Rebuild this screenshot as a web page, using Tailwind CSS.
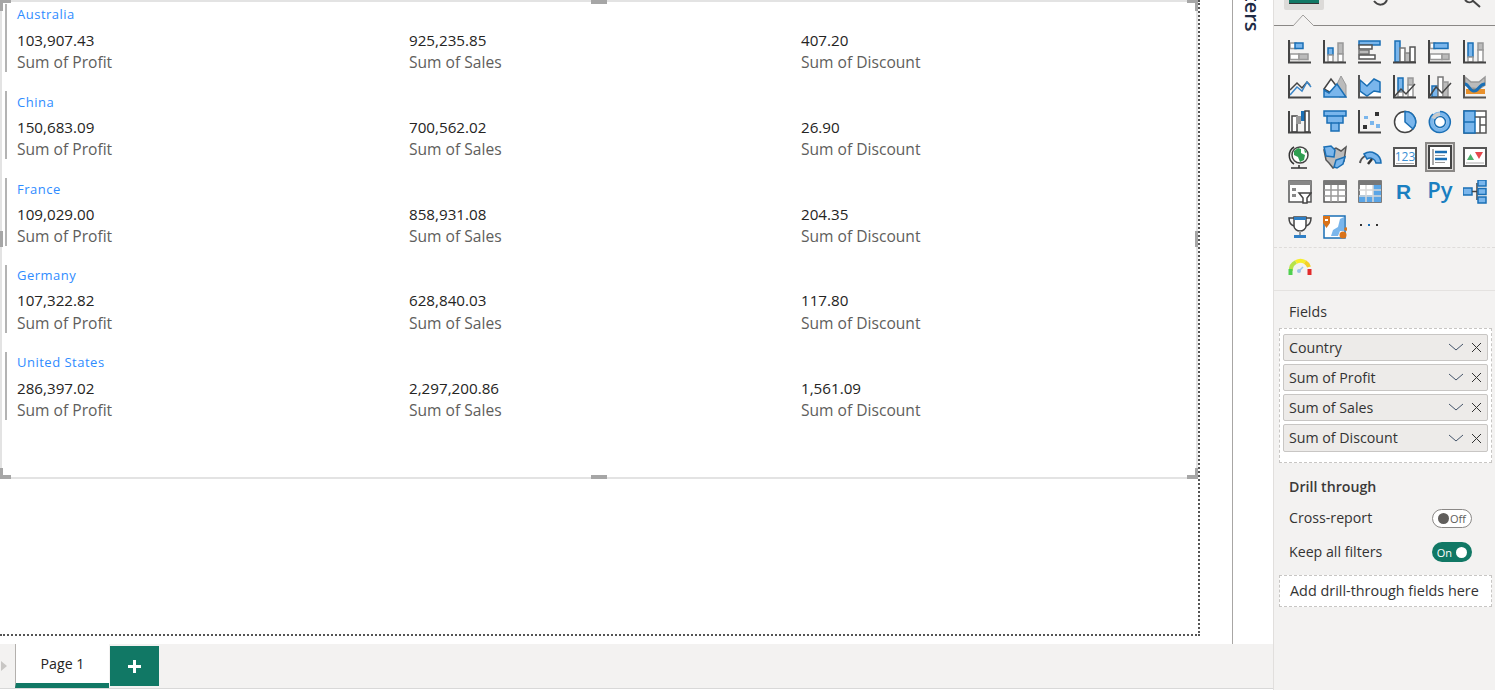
<!DOCTYPE html>
<html lang="en">
<head>
    <meta charset="UTF-8">
    <title>Report canvas</title>
    <script src="https://cdn.jsdelivr.net/npm/@tailwindcss/browser@4"></script>
</head>
<body class="bg-white overflow-hidden font-['Open_Sans',sans-serif] text-[14.2px] text-[#252423]">

<div class="flex w-[1495px] h-[690px] overflow-hidden">
    <!-- Left: canvas + page tabs -->
    <div class="w-[1273px] flex flex-col">
        <div class="flex h-[644px]">
            <div class="w-[1232px] pt-0">
                <div class="w-[1200px] h-[636px] border-r-2 border-b-2 border-dotted border-[#555]">
                    <!-- Selected visual -->
                    <div class="relative w-[1198px] h-[479px] border-2 border-[#e3e3e3]">
                        <div class="absolute -left-[2px] -top-[2px] w-[11px] h-[3px] bg-[#a6a6a6]"></div>
                        <div class="absolute -left-[2px] -top-[2px] w-[3px] h-[11px] bg-[#a6a6a6]"></div>
                        <div class="absolute -right-[2px] -top-[2px] w-[11px] h-[3px] bg-[#a6a6a6]"></div>
                        <div class="absolute -right-[2px] -top-[2px] w-[3px] h-[11px] bg-[#a6a6a6]"></div>
                        <div class="absolute -left-[2px] -bottom-[2px] w-[11px] h-[4px] bg-[#a6a6a6]"></div>
                        <div class="absolute -left-[2px] -bottom-[2px] w-[3px] h-[11px] bg-[#a6a6a6]"></div>
                        <div class="absolute -right-[2px] -bottom-[2px] w-[11px] h-[4px] bg-[#a6a6a6]"></div>
                        <div class="absolute -right-[2px] -bottom-[2px] w-[3px] h-[11px] bg-[#a6a6a6]"></div>
                        <div class="absolute left-[589px] -top-[2px] w-[16px] h-[4px] bg-[#a6a6a6]"></div>
                        <div class="absolute left-[589px] -bottom-[2px] w-[16px] h-[4px] bg-[#a6a6a6]"></div>
                        <div class="absolute -left-[2px] top-[229px] w-[3px] h-[16px] bg-[#a6a6a6]"></div>
                        <div class="absolute -right-[2px] top-[229px] w-[3px] h-[16px] bg-[#a6a6a6]"></div>

                        <!-- Multi-row card -->
                        <div class="flex flex-col">
                            <div class="h-[87px] pl-[3px] pt-[2px]">
                                <div class="border-l-2 border-[#b3b3b3] h-[68px] pl-[10px]">
                                    <div class="text-[13px] leading-[20px] text-[#2f8cff] tracking-[0.5px]">Australia</div>
                                    <div class="grid grid-cols-[392px_392px_392px] mt-[5px] leading-[22px] text-[15.2px]">
                                        <div><div>103,907.43</div><div class="text-[15.6px] text-[#605e5c]">Sum of Profit</div></div>
                                        <div><div>925,235.85</div><div class="text-[15.6px] text-[#605e5c]">Sum of Sales</div></div>
                                        <div><div>407.20</div><div class="text-[15.6px] text-[#605e5c]">Sum of Discount</div></div>
                                    </div>
                                </div>
                            </div>
                            <div class="h-[87px] pl-[3px] pt-[2px]">
                                <div class="border-l-2 border-[#b3b3b3] h-[68px] pl-[10px]">
                                    <div class="text-[13px] leading-[20px] pt-[1px] text-[#2f8cff] tracking-[0.5px]">China</div>
                                    <div class="grid grid-cols-[392px_392px_392px] mt-[4px] leading-[22px] text-[15.2px]">
                                        <div><div>150,683.09</div><div class="text-[15.6px] text-[#605e5c]">Sum of Profit</div></div>
                                        <div><div>700,562.02</div><div class="text-[15.6px] text-[#605e5c]">Sum of Sales</div></div>
                                        <div><div>26.90</div><div class="text-[15.6px] text-[#605e5c]">Sum of Discount</div></div>
                                    </div>
                                </div>
                            </div>
                            <div class="h-[87px] pl-[3px] pt-[2px]">
                                <div class="border-l-2 border-[#b3b3b3] h-[68px] pl-[10px]">
                                    <div class="text-[13px] leading-[20px] pt-[1px] text-[#2f8cff] tracking-[0.5px]">France</div>
                                    <div class="grid grid-cols-[392px_392px_392px] mt-[4px] leading-[22px] text-[15.2px]">
                                        <div><div>109,029.00</div><div class="text-[15.6px] text-[#605e5c]">Sum of Profit</div></div>
                                        <div><div>858,931.08</div><div class="text-[15.6px] text-[#605e5c]">Sum of Sales</div></div>
                                        <div><div>204.35</div><div class="text-[15.6px] text-[#605e5c]">Sum of Discount</div></div>
                                    </div>
                                </div>
                            </div>
                            <div class="h-[87px] pl-[3px] pt-[2px]">
                                <div class="border-l-2 border-[#b3b3b3] h-[68px] pl-[10px]">
                                    <div class="text-[13px] leading-[20px] text-[#2f8cff] tracking-[0.5px]">Germany</div>
                                    <div class="grid grid-cols-[392px_392px_392px] mt-[4px] leading-[23px] text-[15.2px]">
                                        <div><div>107,322.82</div><div class="text-[15.6px] text-[#605e5c]">Sum of Profit</div></div>
                                        <div><div>628,840.03</div><div class="text-[15.6px] text-[#605e5c]">Sum of Sales</div></div>
                                        <div><div>117.80</div><div class="text-[15.6px] text-[#605e5c]">Sum of Discount</div></div>
                                    </div>
                                </div>
                            </div>
                            <div class="h-[87px] pl-[3px] pt-[2px]">
                                <div class="border-l-2 border-[#b3b3b3] h-[68px] pl-[10px]">
                                    <div class="text-[13px] leading-[20px] text-[#2f8cff] tracking-[0.5px]">United States</div>
                                    <div class="grid grid-cols-[392px_392px_392px] mt-[5px] leading-[22px] text-[15.2px]">
                                        <div><div>286,397.02</div><div class="text-[15.6px] text-[#605e5c]">Sum of Profit</div></div>
                                        <div><div>2,297,200.86</div><div class="text-[15.6px] text-[#605e5c]">Sum of Sales</div></div>
                                        <div><div>1,561.09</div><div class="text-[15.6px] text-[#605e5c]">Sum of Discount</div></div>
                                    </div>
                                </div>
                            </div>
                        </div>
                    </div>
                </div>
            </div>
            <!-- Collapsed filters strip -->
            <div class="w-[41px] border-l border-[#a8a6a4] overflow-hidden">
                <div class="[writing-mode:vertical-rl] -mt-[28px] ml-[7px] text-[20px] leading-[24px] font-semibold text-[#1f2a44]">Filters</div>
            </div>
        </div>
        <!-- Page tabs -->
        <div class="h-[45px] bg-[#f3f2f1] flex items-start border-b border-[#d8d8d8]">
            <div class="w-[15px] h-full flex items-center pl-[1px]">
                <div class="w-0 h-0 border-y-[5px] border-y-transparent border-l-[6px] border-l-[#c8c6c4]"></div>
            </div>
            <div class="w-[94px] h-[44px] bg-white border-l border-[#b3b0ad] border-b-[5px] border-b-[#117865] flex items-center justify-center pt-[1px] text-[#252423]">Page 1</div>
            <div class="w-[49px] h-[40px] ml-[1px] mt-[2px] bg-[#117865] flex items-center justify-center">
                <svg width="15" height="15" viewBox="0 0 15 15"><path d="M6 1h3v5h5v3H9v5H6V9H1V6h5z" fill="#fff"/></svg>
            </div>
        </div>
    </div>

    <!-- Right: visualizations pane -->
    <div class="w-[222px] h-[690px] bg-[#f3f2f1] border-l border-[#e1dfdd] text-[#333]">
        <div class="relative h-[26px] border-b border-[#8a8886]">
            <div class="absolute left-[10px] top-0 w-[40px] h-[10px] bg-[#dcdad8] rounded-b-[2px] flex justify-center">
                <div class="w-[30px] h-[4px] bg-[#117865] border-b border-[#333]"></div>
            </div>
            <svg class="absolute left-[19px] top-[14px]" width="22" height="12" viewBox="0 0 22 12"><path d="M0 12 L10 1 L21 12" fill="#f3f2f1" stroke="#a19f9d"/></svg>
            <svg class="absolute left-[98px] top-0" width="24" height="6" viewBox="0 0 24 6"><path d="M2 1c4 5 10 5 13-1" fill="none" stroke="#444" stroke-width="2"/></svg>
            <svg class="absolute left-[188px] top-0" width="24" height="8" viewBox="0 0 24 8"><path d="M3 0c3 3 5 3 8 1M10 0l8 7" fill="none" stroke="#444" stroke-width="2"/></svg>
        </div>

        <!-- Visual icons -->
        <div class="grid grid-cols-[repeat(6,24px)] auto-rows-[24px] gap-x-[11px] gap-y-[11px] pl-[14px] pt-[14px] h-[222px] border-b border-dashed border-[#dedcda]">
            <svg width="24" height="24" viewBox="0 0 24 24" fill="none" stroke-width="1.500"><rect x="2" y="3" width="6" height="5.500" fill="#fff" stroke="#999"/><rect x="7" y="3" width="8" height="5.500" fill="#7ab6ec" stroke="#1a6fb5"/><rect x="2" y="14" width="9" height="5.500" fill="#fff" stroke="#999"/><rect x="11" y="14" width="9" height="5.500" fill="#bbb" stroke="#999"/><path d="M1 0v22.500h22" stroke="#444" stroke-width="2"/></svg>
            <svg width="24" height="24" viewBox="0 0 24 24" fill="none" stroke-width="1.500"><rect x="5" y="8" width="5" height="7" fill="#7ab6ec" stroke="#1a6fb5"/><rect x="5" y="15" width="5" height="7" fill="#fff" stroke="#999"/><rect x="15" y="3" width="5" height="11" fill="#bbb" stroke="#999"/><rect x="15" y="14" width="5" height="8" fill="#fff" stroke="#999"/><path d="M1 0v22.500h22" stroke="#444" stroke-width="2"/></svg>
            <svg width="24" height="24" viewBox="0 0 24 24" fill="none" stroke-width="1.500"><rect x="1" y="1" width="21" height="4" fill="#7ab6ec" stroke="#1a6fb5"/><rect x="1" y="5" width="13" height="4" fill="#fff" stroke="#555"/><rect x="1" y="10" width="10" height="4" fill="#bbb" stroke="#777"/><rect x="1" y="15" width="16" height="4" fill="#fff" stroke="#555"/><path d="M0 22.500h23" stroke="#444" stroke-width="2"/></svg>
            <svg width="24" height="24" viewBox="0 0 24 24" fill="none" stroke-width="1.500"><rect x="2" y="1" width="5" height="21" fill="#7ab6ec" stroke="#1a6fb5"/><rect x="7" y="8" width="5" height="14" fill="#fff" stroke="#777"/><rect x="12" y="13" width="5" height="9" fill="#bbb" stroke="#888"/><rect x="17" y="7" width="5" height="15" fill="#fff" stroke="#555"/><path d="M0 22.500h23" stroke="#444" stroke-width="2"/></svg>
            <svg width="24" height="24" viewBox="0 0 24 24" fill="none" stroke-width="1.500"><rect x="2" y="3" width="5" height="5.500" fill="#fff" stroke="#999"/><rect x="6" y="3" width="14" height="5.500" fill="#7ab6ec" stroke="#1a6fb5"/><rect x="2" y="14" width="12" height="5.500" fill="#fff" stroke="#999"/><rect x="14" y="14" width="7" height="5.500" fill="#bbb" stroke="#999"/><path d="M1 0v22.500h22" stroke="#444" stroke-width="2"/></svg>
            <svg width="24" height="24" viewBox="0 0 24 24" fill="none" stroke-width="1.500"><rect x="5" y="3" width="5" height="14" fill="#7ab6ec" stroke="#1a6fb5"/><rect x="5" y="17" width="5" height="5" fill="#fff" stroke="#999"/><rect x="15" y="3" width="5" height="7" fill="#bbb" stroke="#999"/><rect x="15" y="10" width="5" height="12" fill="#fff" stroke="#999"/><path d="M1 0v22.500h22" stroke="#444" stroke-width="2"/></svg>

            <svg width="24" height="24" viewBox="0 0 24 24" fill="none"><path d="M2 15l7-7 5 5 5-6 3 3" stroke="#444" stroke-width="1.500"/><path d="M2 20l7-8 5 4 5-9 4 5" stroke="#3a86c8" stroke-width="1.500"/><path d="M1 0v22.500h22" stroke="#444" stroke-width="2"/></svg>
            <svg width="24" height="24" viewBox="0 0 24 24" fill="none"><path d="M14 9l4-8 5 9v12h-7z" fill="#bbb" stroke="#999"/><path d="M1 14l7-10 7 9-5 6z" fill="#fff" stroke="#444" stroke-width="1.500"/><path d="M1 15l5 3 8-9 9 13H1z" fill="#7ab6ec" stroke="#1a6fb5" stroke-width="1.500"/></svg>
            <svg width="24" height="24" viewBox="0 0 24 24" fill="none"><path d="M2 7v15h20V8z" fill="#fff"/><path d="M2 5l7 6 7-7 6 3v10l-6-1-7 5-7-5z" fill="#7ab6ec" stroke="#1a6fb5" stroke-width="1.500"/><path d="M1 0v22.500h22" stroke="#555" stroke-width="2"/></svg>
            <svg width="24" height="24" viewBox="0 0 24 24" fill="none" stroke-width="1.500"><rect x="5" y="3" width="5" height="14" fill="#7ab6ec" stroke="#1a6fb5"/><rect x="5" y="17" width="5" height="5" fill="#fff" stroke="#999"/><rect x="15" y="3" width="5" height="7" fill="#bbb" stroke="#999"/><rect x="15" y="10" width="5" height="12" fill="#fff" stroke="#999"/><path d="M1 22l7-8 5 5 9-10" stroke="#444"/><path d="M1 0v22.500h22" stroke="#444" stroke-width="2"/></svg>
            <svg width="24" height="24" viewBox="0 0 24 24" fill="none" stroke-width="1.500"><rect x="4" y="11" width="6" height="11" fill="#7ab6ec" stroke="#1a6fb5"/><rect x="10" y="2" width="5" height="20" fill="#fff" stroke="#777"/><rect x="15" y="7" width="5" height="15" fill="#bbb" stroke="#999"/><path d="M1 22l7-10 6 6 9-10" stroke="#444"/><path d="M1 0v22.500h22" stroke="#444" stroke-width="2"/></svg>
            <svg width="24" height="24" viewBox="0 0 24 24" fill="none"><path d="M2 2l6 5 8 0 6-5v8l-6 4-8-1-6-3z" fill="#bbb" stroke="#999" stroke-width="1.500"/><rect x="3" y="14" width="19" height="5" fill="#e8912d"/><path d="M2 9c4 0 4 7 9 7s5-7 11-7" stroke="#1a6fb5" stroke-width="3"/><path d="M1 0v22.500h22" stroke="#555" stroke-width="2"/></svg>

            <svg width="24" height="24" viewBox="0 0 24 24" fill="none"><rect x="4" y="6" width="5" height="16" fill="#fff" stroke="#444" stroke-width="1.500"/><rect x="8" y="6" width="5" height="8" fill="#999"/><rect x="13" y="1" width="4" height="10" fill="#1a6fb5"/><rect x="17" y="1" width="4" height="21" fill="#fff" stroke="#444" stroke-width="1.500"/><path d="M1 1v21.500h22" stroke="#444" stroke-width="2"/></svg>
            <svg width="24" height="24" viewBox="0 0 24 24" fill="none"><path d="M1 1h22v5h-3v7h-4v8H8v-8H4V6H1z" fill="#7ab6ec" stroke="#1a6fb5" stroke-width="1.500"/><path d="M4 6h16M8 13h8" stroke="#1a6fb5" stroke-width="1.500"/></svg>
            <svg width="24" height="24" viewBox="0 0 24 24" fill="none"><rect x="6" y="6" width="4" height="3" fill="#7ab6ec"/><rect x="12" y="11" width="4" height="4" fill="#7ab6ec"/><rect x="18" y="14" width="4" height="4" fill="#7ab6ec"/><rect x="17" y="2" width="4" height="4" fill="#333"/><rect x="5" y="15" width="4" height="4" fill="#333"/><path d="M1 0v22.500h22" stroke="#444" stroke-width="2"/></svg>
            <svg width="24" height="24" viewBox="0 0 24 24" fill="none"><circle cx="12" cy="12" r="10.500" fill="#fff" stroke="#444" stroke-width="1.500"/><path d="M12 1.500A10.500 10.500 0 0 1 20 19L12 12z" fill="#7ab6ec" stroke="#1a6fb5" stroke-width="1.500"/></svg>
            <svg width="24" height="24" viewBox="0 0 24 24" fill="none"><circle cx="12" cy="12" r="8.500" stroke="#7ab6ec" stroke-width="4"/><path d="M5 4A10.500 10.500 0 1 0 12 1.500" stroke="#1a6fb5" stroke-width="1.500"/><circle cx="12" cy="12" r="5.500" fill="#fff" stroke="#1a6fb5" stroke-width="1.500"/><path d="M3.500 8A9.500 9.500 0 0 1 12 2.500v3.500a6 6 0 0 0-5 3z" fill="#ccc"/></svg>
            <svg width="24" height="24" viewBox="0 0 24 24" fill="none"><rect x="1" y="1" width="22" height="22" fill="#fff" stroke="#555" stroke-width="1.500"/><rect x="1" y="1" width="11" height="22" fill="#7ab6ec" stroke="#1a6fb5" stroke-width="1.500"/><path d="M1 12h11" stroke="#1a6fb5" stroke-width="1.500"/><path d="M12 7h11M17 7v16M17 15h6" stroke="#555" stroke-width="1.500"/></svg>

            <svg width="24" height="24" viewBox="0 0 24 24" fill="none"><path d="M6 2a10 10 0 0 0 0 17M3 23h16M11 20v3" stroke="#333" stroke-width="1.500"/><circle cx="12" cy="10" r="8" fill="#fff" stroke="#444" stroke-width="1.500"/><path d="M6 6l4-3 3 1 0 4 4 2-1 5-4 2-2-5-4-2zM16 4l3 3-2 1z" fill="#2f9e51"/></svg>
            <svg width="24" height="24" viewBox="0 0 24 24" fill="none"><path d="M1 5l2 10 3 3 4 5 6-3 5-4 2-14-5 4-5-3-5 2z" fill="#bbb" stroke="#555" stroke-width="1.500"/><path d="M1 2l7-1 4 4-1 7-8-1zM11 22l2-7 9-3-2 7-6 4z" fill="#7ab6ec" stroke="#1a6fb5" stroke-width="1.500"/></svg>
            <svg width="24" height="24" viewBox="0 0 24 24" fill="none"><path d="M2 18a10 10 0 0 1 5-7" stroke="#555" stroke-width="2"/><path d="M6 9a11 11 0 0 1 17 9h-5a6 6 0 0 0-9-4z" fill="#7ab6ec" stroke="#1a6fb5" stroke-width="1.500"/><path d="M10 19l4-5" stroke="#333" stroke-width="2.500"/></svg>
            <svg width="24" height="24" viewBox="0 0 24 24" fill="none"><rect x="1" y="3" width="22" height="18" fill="#fff" stroke="#555" stroke-width="2"/><text x="12" y="15.500" text-anchor="middle" font-size="12" fill="#3a8fd4" font-family="Open Sans, sans-serif">123</text><path d="M3 18.500h18" stroke="#aaa"/></svg>
            <div class="w-[30px] h-[30px] -ml-[3px] -mt-[3px] bg-[#dddbd9] border-2 border-[#8a8886] flex items-center justify-center">
                <svg width="24" height="24" viewBox="0 0 24 24" fill="none"><rect x="1" y="1" width="22" height="22" fill="#fff" stroke="#444" stroke-width="2"/><path d="M5 4v16" stroke="#aaa" stroke-width="2"/><path d="M7 7h12M7 14h12" stroke="#1a6fb5" stroke-width="2.500"/><path d="M7 10.500h10M7 17.500h10" stroke="#999"/></svg>
            </div>
            <svg width="24" height="24" viewBox="0 0 24 24" fill="none"><rect x="1" y="3" width="22" height="18" fill="#fff" stroke="#555" stroke-width="2"/><path d="M4 15l3.500-6 3.500 6z" fill="#4caf6b"/><path d="M12 7h8l-4 7z" fill="#e5484d"/><path d="M3 18h18" stroke="#aaa"/></svg>

            <svg width="24" height="24" viewBox="0 0 24 24" fill="none"><rect x="1" y="1" width="22" height="21" fill="#fff" stroke="#555" stroke-width="1.500"/><rect x="1" y="1" width="22" height="4" fill="#888"/><rect x="4" y="8" width="4" height="3" fill="#888"/><rect x="4" y="14" width="4" height="3" fill="#888"/><path d="M11 13h12l-4 5v5h-4v-5z" fill="#fff" stroke="#444" stroke-width="1.500"/></svg>
            <svg width="24" height="24" viewBox="0 0 24 24" fill="none"><rect x="1" y="1" width="22" height="21" fill="#fff" stroke="#555" stroke-width="1.500"/><rect x="1" y="1" width="22" height="4" fill="#777"/><path d="M1 10h22M1 16h22M8 5v17M15 5v17" stroke="#999" stroke-width="1.500"/></svg>
            <svg width="24" height="24" viewBox="0 0 24 24" fill="none"><rect x="1" y="1" width="22" height="21" fill="#fff" stroke="#555" stroke-width="1.500"/><rect x="1" y="1" width="22" height="4" fill="#777"/><rect x="15" y="5" width="8" height="17" fill="#5aa5e6"/><rect x="1" y="15" width="22" height="7" fill="#5aa5e6"/><path d="M1 10h22M1 16h22M8 5v17M15 5v17" stroke="#d7d7d7" stroke-width="1.500"/></svg>
            <div class="text-[21px] leading-[24px] font-bold text-[#1a7fc1] -ml-[3px] text-center font-['Liberation_Sans',sans-serif]">R</div>
            <div class="text-[22px] leading-[24px] font-semibold text-[#1a7fc1] text-center -mx-[4px] -mt-[3px] font-['Open_Sans',sans-serif]">Py</div>
            <svg width="24" height="24" viewBox="0 0 24 24" fill="none"><rect x="0" y="8" width="9" height="7" fill="#7ab6ec" stroke="#1a6fb5" stroke-width="1.500"/><path d="M9 11.500h5M14 3v17" stroke="#444" stroke-width="1.500"/><rect x="15" y="0" width="8" height="6" fill="#7ab6ec" stroke="#1a6fb5" stroke-width="1.500"/><rect x="15" y="8.500" width="8" height="6" fill="#7ab6ec" stroke="#1a6fb5" stroke-width="1.500"/><rect x="15" y="17" width="8" height="6" fill="#7ab6ec" stroke="#1a6fb5" stroke-width="1.500"/></svg>

            <svg width="24" height="24" viewBox="0 0 24 24" fill="none"><path d="M6 2h12v9c0 3-3 5-6 5s-6-2-6-5z" fill="#fff" stroke="#444" stroke-width="1.500"/><path d="M6 3H1c0 5 2 7 5 8M18 3h5c0 5-2 7-5 8" stroke="#444" stroke-width="1.500"/><path d="M6 2h12v3H6z" fill="#2f80c6"/><path d="M12 16v5" stroke="#999" stroke-width="2"/><rect x="6" y="20" width="12" height="3" fill="#2f80c6"/></svg>
            <svg width="24" height="24" viewBox="0 0 24 24" fill="none"><rect x="1" y="1" width="21" height="22" fill="#fff" stroke="#1a6fb5" stroke-width="1.500"/><path d="M8 21l2-6 5-3 2-8 4-2v14h-4l-2 5z" fill="#7ab6ec"/><path d="M0 1h7v7l-3.500 5L0 8z" fill="#d9731a"/><rect x="2" y="4" width="3" height="2" fill="#fff"/><circle cx="20" cy="20" r="3.500" fill="#d9731a"/><circle cx="23" cy="14" r="1.800" fill="#d9731a"/></svg>
            <svg width="24" height="24" viewBox="0 0 24 24"><rect x="2" y="9" width="2" height="2" fill="#333"/><rect x="10" y="9" width="2" height="2" fill="#1a6fb5"/><rect x="18" y="9" width="2" height="2" fill="#333"/></svg>
        </div>

        <!-- Custom visual -->
        <div class="h-[43px] pl-[14px] pt-[9px] border-b border-[#e4e2e0]">
            <svg width="24" height="24" viewBox="0 0 24 24" fill="none"><path d="M3 14A9 9 0 0 1 8 5" stroke="#b7e34a" stroke-width="4"/><path d="M8 5a9 9 0 0 1 9 0" stroke="#f6ee2c" stroke-width="4"/><path d="M17 5a9 9 0 0 1 4 5" stroke="#f4d128" stroke-width="4"/><path d="M2.500 12v6" stroke="#4fd04f" stroke-width="4"/><path d="M21.500 12v6" stroke="#e22b2b" stroke-width="4"/><path d="M11 14l4-4" stroke="#9cc4e8" stroke-width="1.500"/><circle cx="11" cy="14" r="2" fill="#9cc4e8"/></svg>
        </div>

        <!-- Fields -->
        <div class="pl-[15px] pt-[11px] leading-[20px]">Fields</div>
        <div class="ml-[5px] mt-[6px] w-[213px] h-[135px] bg-white border border-dashed border-[#c8c6c4] px-[3px] pt-[5px] flex flex-col gap-[3px]">
            <div class="h-[27px] bg-[#edebe9] border border-[#c8c6c4] rounded-[2px] flex items-center pl-[5px] pr-[5px]">
                <span class="flex-1">Country</span>
                <svg width="16" height="9" viewBox="0 0 16 9" fill="none"><path d="M1 1l7 6 7-6" stroke="#44546a"/></svg>
                <svg class="ml-[7px]" width="11" height="11" viewBox="0 0 11 11" fill="none"><path d="M1 1l9 9M10 1l-9 9" stroke="#333"/></svg>
            </div>
            <div class="h-[27px] bg-[#edebe9] border border-[#c8c6c4] rounded-[2px] flex items-center pl-[5px] pr-[5px]">
                <span class="flex-1">Sum of Profit</span>
                <svg width="16" height="9" viewBox="0 0 16 9" fill="none"><path d="M1 1l7 6 7-6" stroke="#44546a"/></svg>
                <svg class="ml-[7px]" width="11" height="11" viewBox="0 0 11 11" fill="none"><path d="M1 1l9 9M10 1l-9 9" stroke="#333"/></svg>
            </div>
            <div class="h-[27px] bg-[#edebe9] border border-[#c8c6c4] rounded-[2px] flex items-center pl-[5px] pr-[5px]">
                <span class="flex-1">Sum of Sales</span>
                <svg width="16" height="9" viewBox="0 0 16 9" fill="none"><path d="M1 1l7 6 7-6" stroke="#44546a"/></svg>
                <svg class="ml-[7px]" width="11" height="11" viewBox="0 0 11 11" fill="none"><path d="M1 1l9 9M10 1l-9 9" stroke="#333"/></svg>
            </div>
            <div class="h-[28px] bg-[#edebe9] border border-[#c8c6c4] rounded-[2px] flex items-center pl-[5px] pr-[5px]">
                <span class="flex-1">Sum of Discount</span>
                <svg width="16" height="9" viewBox="0 0 16 9" fill="none"><path d="M1 1l7 6 7-6" stroke="#44546a"/></svg>
                <svg class="ml-[7px]" width="11" height="11" viewBox="0 0 11 11" fill="none"><path d="M1 1l9 9M10 1l-9 9" stroke="#333"/></svg>
            </div>
        </div>

        <!-- Drill through -->
        <div class="pl-[15px] mt-[14px] leading-[20px] font-semibold text-[#3b3a39]">Drill through</div>
        <div class="pl-[15px] pr-[23px] mt-[11px] h-[20px] flex items-center justify-between">
            <span>Cross-report</span>
            <div class="w-[40px] h-[19px] rounded-full bg-white border border-[#8a8886] flex items-center pl-[5px] gap-[1px]">
                <div class="w-[11px] h-[11px] rounded-full bg-[#605e5c]"></div>
                <span class="text-[11px] leading-none text-[#605e5c]">Off</span>
            </div>
        </div>
        <div class="pl-[15px] pr-[23px] mt-[14px] h-[20px] flex items-center justify-between">
            <span>Keep all filters</span>
            <div class="w-[40px] h-[20px] rounded-full bg-[#117865] flex items-center justify-end pr-[5px] gap-[4px]">
                <span class="text-[11px] leading-none text-white">On</span>
                <div class="w-[11px] h-[11px] rounded-full bg-white"></div>
            </div>
        </div>
        <div class="ml-[5px] mt-[13px] w-[213px] h-[32px] bg-white border border-dashed border-[#c8c6c4] flex items-center pl-[10px] text-[14.4px]">Add drill-through fields here</div>
    </div>
</div>

</body>
</html>
